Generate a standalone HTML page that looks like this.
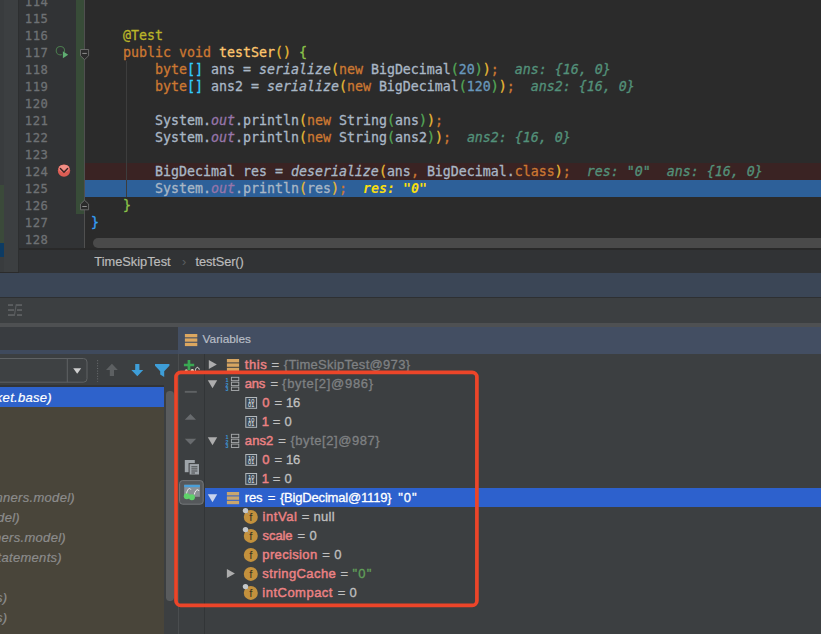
<!DOCTYPE html>
<html>
<head>
<meta charset="utf-8">
<title>Debugger</title>
<style>
html,body{margin:0;padding:0;}
body{width:821px;height:634px;overflow:hidden;background:#2b2b2b;position:relative;font-family:"Liberation Sans",sans-serif;}
.abs{position:absolute;}
/* ---------- editor ---------- */
#leftstrip{left:0;top:0;width:18px;height:272px;background:#3c3f41;}
#leftstrip .a{left:0;top:0;width:4px;height:272px;background:#393c3e;}
#leftstrip .g{left:0;top:185px;width:4px;height:58px;background:#3b4a3a;}
#leftstrip .b{left:0;top:243px;width:4px;height:14px;background:#0d3b63;}
#gutline{left:17.5px;top:0;width:1px;height:272px;background:#2d2f30;}
#gutter{left:18.5px;top:0;width:66px;height:250px;background:#313335;}
#vcs{left:76px;top:0;width:8.5px;height:213.5px;background:#384c38;}
#gutsep{left:84px;top:0;width:1px;height:250px;background:#505050;}
.ln{left:24.7px;width:30px;height:17px;margin-top:1px;line-height:17px;font-family:"DejaVu Sans Mono","Liberation Mono",monospace;font-size:12.2px;letter-spacing:0.62px;color:#6e7174;white-space:pre;-webkit-text-stroke:0.3px currentColor;}
.cl{left:91px;height:17px;line-height:17px;font-family:"DejaVu Sans Mono","Liberation Mono",monospace;font-size:13.29px;color:#a9b7c6;white-space:pre;-webkit-text-stroke:0.3px currentColor;}
.k{color:#cc7832;}
.an{color:#bbb529;}
.fn{color:#ffc66d;}
.i{font-style:italic;}
.sf{font-style:italic;color:#9876aa;}
.n{color:#6897bb;}
.r1{color:#e8ba36;}
.r2{color:#54a857;}
.c1{color:#359ff4;}
.c2{color:#8bc34a;}
.s1{color:#33ccff;}
.h{color:#53917a;font-style:italic;}
.hy{color:#f8de10;font-style:italic;font-weight:bold;-webkit-text-stroke:0;}
#bpline{left:84.5px;top:163px;width:737px;height:17px;background:#3a2323;}
#exline{left:84.5px;top:180px;width:737px;height:17px;background:#2d6099;}
#indent{left:125.5px;top:61px;width:1px;height:136px;background:#3d3d3d;}
#hscroll{left:93px;top:238px;width:740px;height:10px;border-radius:5px;background:#4a4a4a;}
#crumbs{left:18.5px;top:250px;width:803px;height:22.5px;background:#313335;}
#crumbs span{position:absolute;top:1px;line-height:22px;font-size:12.8px;color:#bbbbbb;white-space:pre;-webkit-text-stroke:0.2px currentColor;}
/* ---------- middle bars ---------- */
#bar1{left:0;top:272.5px;width:821px;height:24.5px;background:#3b4656;}
#bar1l{left:0;top:297px;width:821px;height:1px;background:#2e3032;}
#tb{left:0;top:298px;width:821px;height:25.5px;background:#3c3f41;}
#band{left:0;top:323.3px;width:821px;height:4px;background:#4e5052;}
#hdrL{left:0;top:327.2px;width:178.3px;height:22.4px;background:#393c40;}
#hdrL2{left:0;top:349.6px;width:178.3px;height:4.5px;background:#3f4a5d;}
#hdrR{left:178.3px;top:327.2px;width:643px;height:26.9px;background:#434e62;}
#hdrR span{position:absolute;left:24.3px;top:0;line-height:24px;font-size:11.8px;-webkit-text-stroke:0.2px currentColor;color:#b9bec6;}
/* ---------- bottom ---------- */
#bottom{left:0;top:354.1px;width:821px;height:281px;background:#3c3f41;}
#frames{left:0;top:407px;width:164px;height:227px;background:#49453a;}
#fsel{left:0;top:386.6px;width:164px;height:20.6px;background:#2e62cb;}
.fr{left:-199px;height:20px;line-height:20px;font-size:13px;letter-spacing:0.3px;font-style:italic;color:#8c8c8c;white-space:pre;text-align:right;-webkit-text-stroke:0.2px currentColor;}
#fthumb{left:166.4px;top:390.5px;width:7.4px;height:210px;background:#595b5d;border-radius:3.7px;}
#vsep1{left:178px;top:354px;width:1px;height:281px;background:#4a4d4f;}
#vsep2{left:204px;top:353.6px;width:1px;height:281px;background:#323537;}
#vsel{left:205px;top:488.4px;width:616px;height:18.6px;background:#2d61cd;}
.vr{left:0;height:19px;line-height:19px;font-size:13px;color:#c0c0c0;white-space:pre;-webkit-text-stroke:0.3px currentColor;}
.vr span{position:absolute;top:0;}
.nm{color:#ec8284;-webkit-text-stroke:0.45px currentColor;}
.gy{color:#7f8183;}
.st{color:#62a05a;}
#redbox{left:174.1px;top:370.6px;width:297.3px;height:229.6px;border:3.6px solid #ec4529;border-radius:6.5px;}
</style>
</head>
<body>
<!-- editor -->
<div id="leftstrip" class="abs"><div class="a abs"></div><div class="g abs"></div><div class="b abs"></div></div>
<div id="gutline" class="abs"></div>
<div id="gutter" class="abs"></div>
<div id="vcs" class="abs"></div>
<div id="gutsep" class="abs"></div>
<div id="bpline" class="abs"></div>
<div id="exline" class="abs"></div>
<div id="indent" class="abs"></div>

<div class="ln abs" style="top:-7px">114</div>
<div class="ln abs" style="top:10px">115</div>
<div class="ln abs" style="top:27px">116</div>
<div class="ln abs" style="top:44px">117</div>
<div class="ln abs" style="top:61px">118</div>
<div class="ln abs" style="top:78px">119</div>
<div class="ln abs" style="top:95px">120</div>
<div class="ln abs" style="top:112px">121</div>
<div class="ln abs" style="top:129px">122</div>
<div class="ln abs" style="top:146px">123</div>
<div class="ln abs" style="top:163px">124</div>
<div class="ln abs" style="top:180px">125</div>
<div class="ln abs" style="top:197px">126</div>
<div class="ln abs" style="top:214px">127</div>
<div class="ln abs" style="top:231px">128</div>

<div class="cl abs" style="top:27px">    <span class="an">@Test</span></div>
<div class="cl abs" style="top:44px">    <span class="k">public void </span><span class="fn">testSer</span><span class="r1">()</span> <span class="c2">{</span></div>
<div class="cl abs" style="top:61px">        <span class="k">byte</span><span class="s1">[]</span> ans = <span class="i">serialize</span><span class="r1">(</span><span class="k">new </span>BigDecimal<span class="r2">(</span><span class="n">20</span><span class="r2">)</span><span class="r1">)</span><span class="k">;</span>  <span class="h">ans: {16, 0}</span></div>
<div class="cl abs" style="top:78px">        <span class="k">byte</span><span class="s1">[]</span> ans2 = <span class="i">serialize</span><span class="r1">(</span><span class="k">new </span>BigDecimal<span class="r2">(</span><span class="n">120</span><span class="r2">)</span><span class="r1">)</span><span class="k">;</span>  <span class="h">ans2: {16, 0}</span></div>
<div class="cl abs" style="top:112px">        System.<span class="sf">out</span>.println<span class="r1">(</span><span class="k">new </span>String<span class="r2">(</span>ans<span class="r2">)</span><span class="r1">)</span><span class="k">;</span></div>
<div class="cl abs" style="top:129px">        System.<span class="sf">out</span>.println<span class="r1">(</span><span class="k">new </span>String<span class="r2">(</span>ans2<span class="r2">)</span><span class="r1">)</span><span class="k">;</span>  <span class="h">ans2: {16, 0}</span></div>
<div class="cl abs" style="top:163px">        BigDecimal res = <span class="i">deserialize</span><span class="r1">(</span>ans<span class="k">, </span>BigDecimal.<span class="k">class</span><span class="r1">)</span><span class="k">;</span>  <span class="h">res: "0"  ans: {16, 0}</span></div>
<div class="cl abs" style="top:180px">        System.<span class="sf">out</span>.println<span class="r1">(</span>res<span class="r1">)</span><span class="k">;</span>  <span class="hy">res: "0"</span></div>
<div class="cl abs" style="top:197px">    <span class="c2">}</span></div>
<div class="cl abs" style="top:214px"><span class="c1">}</span></div>


<svg class="abs" style="left:50px;top:40px" width="50" height="25" viewBox="50 40 50 25">
 <circle cx="60.4" cy="50.7" r="4.2" fill="none" stroke="#4b7a4e" stroke-width="1.1"/>
 <path d="M61.9 50.6 L69 54.8 L61.9 59 Z" fill="#313335"/>
 <path d="M62.9 51.3 L68.2 54.8 L62.9 58.3 Z" fill="#5fae72"/>
 <path d="M80.5 49.5 H88.6 V55.8 L84.55 59.6 L80.5 55.8 Z" fill="#2b2b2b" stroke="#6e6e6e" stroke-width="0.9"/>
 <rect x="82.3" y="52.9" width="4.5" height="1" fill="#8e8e8e"/>
</svg>
<svg class="abs" style="left:50px;top:160px" width="50" height="60" viewBox="50 160 50 60">
 <circle cx="64" cy="170.6" r="6.2" fill="#dc5d54"/><ellipse cx="64" cy="168.6" rx="5.4" ry="3.9" fill="#ec8178"/><ellipse cx="64" cy="167.4" rx="4.2" ry="2.4" fill="#f18e85"/>
 <path d="M60.4 168.4 L64 172.2 L67.6 168.4" fill="none" stroke="#3b2424" stroke-width="1.4" stroke-linecap="round" stroke-linejoin="round"/>
 <path d="M80.5 209.8 H88.6 V204 L84.55 200.3 L80.5 204 Z" fill="#2b2b2b" stroke="#6e6e6e" stroke-width="0.9"/>
 <rect x="82.3" y="206" width="4.5" height="1" fill="#8e8e8e"/>
</svg>
<div id="hscroll" class="abs"></div>
<div class="abs" style="left:18.5px;top:247.8px;width:803px;height:2.2px;background:#292929"></div>
<div id="crumbs" class="abs"><span style="left:75.8px">TimeSkipTest</span><span style="left:163.5px;color:#5b5e60;-webkit-text-stroke:0">›</span><span style="left:177px;letter-spacing:-0.1px">testSer()</span></div>

<!-- middle bars -->
<div id="bar1" class="abs"></div>
<div id="bar1l" class="abs"></div>
<div id="tb" class="abs"></div>
<div id="band" class="abs"></div>
<div id="hdrL" class="abs"></div>
<div id="hdrL2" class="abs"></div>
<div id="hdrR" class="abs"><span>Variables</span></div>

<!-- bottom -->
<div id="bottom" class="abs"></div>
<div id="frames" class="abs"></div>
<div class="abs" style="left:0;top:385.4px;width:164px;height:1.2px;background:#323436"></div>
<div id="fsel" class="abs"></div>
<div id="fthumb" class="abs"></div>
<div id="vsep1" class="abs"></div>
<div id="vsep2" class="abs"></div>
<div id="vsel" class="abs"></div>

<div class="fr abs" style="top:388px;width:251px;color:#fff">socket.base)</div>
<div class="fr abs" style="top:488px;width:274px">runners.model)</div>
<div class="fr abs" style="top:508px;width:219px">model)</div>
<div class="fr abs" style="top:528px;width:265px">runners.model)</div>
<div class="fr abs" style="top:548px;width:261px">statements)</div>
<div class="fr abs" style="top:588px;width:206.4px">runners)</div>
<div class="fr abs" style="top:608px;width:206.4px">runners)</div>

<div class="vr abs" style="top:355px"><span class="nm" style="left:244.8px;letter-spacing:0.56px">this</span><span style="left:271.6px">=</span><span class="gy" style="left:283.8px;letter-spacing:0.30px">{TimeSkipTest@973}</span></div>
<div class="vr abs" style="top:374px"><span class="nm" style="left:244.8px;letter-spacing:-0.28px">ans</span><span style="left:270.4px">=</span><span class="gy" style="left:282.1px;letter-spacing:0.70px">{byte[2]@986}</span></div>
<div class="vr abs" style="top:393px"><span class="nm" style="left:262.3px">0</span><span style="left:274.4px">=</span><span style="left:286.0px;letter-spacing:-0.30px">16</span></div>
<div class="vr abs" style="top:412px"><span class="nm" style="left:261.7px">1</span><span style="left:272.7px">=</span><span style="left:284.6px">0</span></div>
<div class="vr abs" style="top:431px"><span class="nm" style="left:244.8px;letter-spacing:0.10px">ans2</span><span style="left:278.2px">=</span><span class="gy" style="left:290.4px;letter-spacing:0.56px">{byte[2]@987}</span></div>
<div class="vr abs" style="top:450px"><span class="nm" style="left:262.3px">0</span><span style="left:274.4px">=</span><span style="left:286.0px;letter-spacing:-0.30px">16</span></div>
<div class="vr abs" style="top:469px"><span class="nm" style="left:261.7px">1</span><span style="left:272.7px">=</span><span style="left:284.6px">0</span></div>
<div class="vr abs" style="top:488px;color:#fff"><span style="left:244.8px;letter-spacing:-0.13px">res</span><span style="left:267.7px">=</span><span style="left:279.9px;letter-spacing:-0.18px">{BigDecimal@1119}</span><span style="left:398.3px;letter-spacing:0.87px">&quot;0&quot;</span></div>
<div class="vr abs" style="top:507px"><span class="nm" style="left:262.6px;letter-spacing:0.57px">intVal</span><span style="left:301.7px">=</span><span style="left:313.4px;letter-spacing:0.35px">null</span></div>
<div class="vr abs" style="top:526px"><span class="nm" style="left:262.6px;letter-spacing:-0.09px">scale</span><span style="left:297.4px">=</span><span style="left:309.6px">0</span></div>
<div class="vr abs" style="top:545px"><span class="nm" style="left:262.3px;letter-spacing:0.35px">precision</span><span style="left:322.3px">=</span><span style="left:334.2px">0</span></div>
<div class="vr abs" style="top:564px"><span class="nm" style="left:262.3px;letter-spacing:0.41px">stringCache</span><span style="left:340.4px">=</span><span class="st" style="left:352.6px;letter-spacing:1.12px">&quot;0&quot;</span></div>
<div class="vr abs" style="top:583px"><span class="nm" style="left:262.3px;letter-spacing:0.49px">intCompact</span><span style="left:337.7px">=</span><span style="left:349.6px">0</span></div>
<svg class="abs" style="left:204px;top:354px" width="70" height="260" viewBox="204 354 70 260">
<path d="M208.8 359.9 L216.8 364.5 L208.8 369.1 Z" fill="#adadad"/><rect x="226.9" y="359.0" width="12.2" height="3.4" fill="#d6a562"/><rect x="226.9" y="363.4" width="12.2" height="3.4" fill="#d6a562"/><rect x="226.9" y="367.8" width="12.2" height="3.4" fill="#d6a562"/>
<path d="M207.8 380.2 L217.2 380.2 L212.5 388.2 Z" fill="#adadad"/><text x="225.6" y="381.8" font-family="Liberation Sans,sans-serif" font-size="5.4" font-weight="bold" fill="#3d95d6">1</text><text x="225.6" y="386.5" font-family="Liberation Sans,sans-serif" font-size="5.4" font-weight="bold" fill="#3d95d6">2</text><text x="225.6" y="391.2" font-family="Liberation Sans,sans-serif" font-size="5.4" font-weight="bold" fill="#3d95d6">3</text><rect x="231.4" y="377.3" width="7.4" height="3.4" fill="none" stroke="#a9acae" stroke-width="0.9"/><rect x="231.4" y="382.2" width="7.4" height="3.4" fill="none" stroke="#a9acae" stroke-width="0.9"/><rect x="231.4" y="387.1" width="7.4" height="3.4" fill="none" stroke="#a9acae" stroke-width="0.9"/>
<rect x="245.8" y="397.5" width="10.8" height="10.8" fill="#3a4651" stroke="#b3b8bc" stroke-width="1"/><text x="251.2" y="402.6" text-anchor="middle" font-family="Liberation Sans,sans-serif" font-size="5.6" fill="#f0f3f5" style="-webkit-font-smoothing:antialiased">10</text><text x="251.2" y="407.1" text-anchor="middle" font-family="Liberation Sans,sans-serif" font-size="5.6" fill="#f0f3f5">01</text>
<rect x="245.8" y="416.5" width="10.8" height="10.8" fill="#3a4651" stroke="#b3b8bc" stroke-width="1"/><text x="251.2" y="421.6" text-anchor="middle" font-family="Liberation Sans,sans-serif" font-size="5.6" fill="#f0f3f5" style="-webkit-font-smoothing:antialiased">10</text><text x="251.2" y="426.1" text-anchor="middle" font-family="Liberation Sans,sans-serif" font-size="5.6" fill="#f0f3f5">01</text>
<path d="M207.8 437.2 L217.2 437.2 L212.5 445.2 Z" fill="#adadad"/><text x="225.6" y="438.8" font-family="Liberation Sans,sans-serif" font-size="5.4" font-weight="bold" fill="#3d95d6">1</text><text x="225.6" y="443.5" font-family="Liberation Sans,sans-serif" font-size="5.4" font-weight="bold" fill="#3d95d6">2</text><text x="225.6" y="448.2" font-family="Liberation Sans,sans-serif" font-size="5.4" font-weight="bold" fill="#3d95d6">3</text><rect x="231.4" y="434.3" width="7.4" height="3.4" fill="none" stroke="#a9acae" stroke-width="0.9"/><rect x="231.4" y="439.2" width="7.4" height="3.4" fill="none" stroke="#a9acae" stroke-width="0.9"/><rect x="231.4" y="444.1" width="7.4" height="3.4" fill="none" stroke="#a9acae" stroke-width="0.9"/>
<rect x="245.8" y="454.5" width="10.8" height="10.8" fill="#3a4651" stroke="#b3b8bc" stroke-width="1"/><text x="251.2" y="459.6" text-anchor="middle" font-family="Liberation Sans,sans-serif" font-size="5.6" fill="#f0f3f5" style="-webkit-font-smoothing:antialiased">10</text><text x="251.2" y="464.1" text-anchor="middle" font-family="Liberation Sans,sans-serif" font-size="5.6" fill="#f0f3f5">01</text>
<rect x="245.8" y="473.5" width="10.8" height="10.8" fill="#3a4651" stroke="#b3b8bc" stroke-width="1"/><text x="251.2" y="478.6" text-anchor="middle" font-family="Liberation Sans,sans-serif" font-size="5.6" fill="#f0f3f5" style="-webkit-font-smoothing:antialiased">10</text><text x="251.2" y="483.1" text-anchor="middle" font-family="Liberation Sans,sans-serif" font-size="5.6" fill="#f0f3f5">01</text>
<path d="M207.8 494.2 L217.2 494.2 L212.5 502.2 Z" fill="#c9d4ee"/><rect x="226.9" y="492.0" width="12.2" height="3.4" fill="#c9a66e"/><rect x="226.9" y="496.4" width="12.2" height="3.4" fill="#c9a66e"/><rect x="226.9" y="500.8" width="12.2" height="3.4" fill="#c9a66e"/>
<circle cx="250.8" cy="516.9" r="7" fill="#c3913d"/><text x="250.9" y="520.9" text-anchor="middle" font-family="Liberation Sans,sans-serif" font-size="11.5" fill="#3b331f">f</text><path d="M246.2 511.3 L248.6 513.7" stroke="#9a9d9f" stroke-width="1"/><circle cx="245.5" cy="510.6" r="2.7" fill="#c4c8cb"/>
<circle cx="250.8" cy="535.9" r="7" fill="#c3913d"/><text x="250.9" y="539.9" text-anchor="middle" font-family="Liberation Sans,sans-serif" font-size="11.5" fill="#3b331f">f</text><path d="M246.2 530.3 L248.6 532.7" stroke="#9a9d9f" stroke-width="1"/><circle cx="245.5" cy="529.6" r="2.7" fill="#c4c8cb"/>
<circle cx="250.8" cy="554.9" r="7" fill="#c3913d"/><text x="250.9" y="558.9" text-anchor="middle" font-family="Liberation Sans,sans-serif" font-size="11.5" fill="#3b331f">f</text>
<path d="M226.9 568.9 L234.9 573.5 L226.9 578.1 Z" fill="#adadad"/><circle cx="250.8" cy="573.9" r="7" fill="#c3913d"/><text x="250.9" y="577.9" text-anchor="middle" font-family="Liberation Sans,sans-serif" font-size="11.5" fill="#3b331f">f</text>
<circle cx="250.8" cy="592.9" r="7" fill="#c3913d"/><text x="250.9" y="596.9" text-anchor="middle" font-family="Liberation Sans,sans-serif" font-size="11.5" fill="#3b331f">f</text><path d="M246.2 587.3 L248.6 589.7" stroke="#9a9d9f" stroke-width="1"/><circle cx="245.5" cy="586.6" r="2.7" fill="#c4c8cb"/>
</svg>
<svg class="abs" style="left:0;top:297px" width="40" height="28" viewBox="0 297 40 28">
 <g fill="#5b5e60">
  <rect x="8" y="304.1" width="5" height="1.9"/><rect x="8" y="309.1" width="6" height="1.9"/><rect x="8" y="314.1" width="6" height="1.9"/>
  <rect x="16" y="304.1" width="6" height="1.9"/><rect x="17" y="309.1" width="5" height="1.9"/><rect x="17" y="314.1" width="5" height="1.9"/>
 </g>
 <path d="M16.2 304.3 L14.4 315.8" stroke="#5b5e60" stroke-width="1.1" fill="none"/>
</svg>
<svg class="abs" style="left:0;top:354px" width="178" height="34" viewBox="0 354 178 34">
 <rect x="-5" y="358.5" width="92" height="23.7" rx="3.5" fill="#3e4143" stroke="#5f6264" stroke-width="1"/>
 <path d="M67.3 358.5 V382.2" stroke="#5f6264" stroke-width="1"/>
 <path d="M73.2 368.3 H81.2 L77.2 373.8 Z" fill="#cfcfcf"/>
 <path d="M97.6 360.2 V381.6" stroke="#6d7072" stroke-width="1" stroke-dasharray="1 1.6"/>
 <path d="M111.9 363.8 L117.8 370 H114 V376 H109.8 V370 H106 Z" fill="#5d6062"/>
 <path d="M137.3 376.2 L143.2 370 H139.4 V364 H135.2 V370 H131.4 Z" fill="#3e9ed8"/>
 <path d="M155 363.9 H169.4 V365.8 L164.2 371.2 V376.9 L160.2 374.6 V371.2 L155 365.8 Z" fill="#3e9ed8"/>
</svg>
<svg class="abs" style="left:178px;top:354px" width="27" height="156" viewBox="178 354 27 156">
 <path d="M183.9 365 H194.2 M188.95 360 V370.2" stroke="#3aa953" stroke-width="2.7" fill="none"/>
 <circle cx="186.3" cy="370.8" r="1.5" fill="#d9d2b0"/><circle cx="192.3" cy="370.9" r="1.8" fill="#efe7cd"/>
 <path d="M195.3 371 C195.8 366.6 198.4 366.2 199.3 369.6" stroke="#e8e8e8" stroke-width="1" fill="none"/>
 <rect x="184.8" y="390.9" width="12" height="1.9" fill="#5f6264"/>
 <path d="M184.8 419.7 L190.4 414.1 L196 419.7 Z" fill="#686b6e"/>
 <path d="M184.8 438.8 L190.5 444.6 L196.2 438.8 Z" fill="#686b6e"/>
 <rect x="184.8" y="460" width="10" height="12.2" fill="#9fa5aa"/>
 <rect x="189.1" y="463.6" width="10.4" height="11.4" fill="#9fa5aa" stroke="#3c3f41" stroke-width="1"/>
 <path d="M191.4 466.8 H197.4 M191.4 468.9 H197.4 M191.4 471 H197.4 M191.4 473 H195" stroke="#3c3f41" stroke-width="0.9"/>
 <rect x="179.6" y="480.6" width="23.6" height="23.6" rx="3" fill="#55585b" stroke="#74777a" stroke-width="1"/>
 <rect x="184.2" y="484.8" width="15.7" height="12" fill="#8b9095"/>
 <rect x="184.2" y="484.8" width="15.7" height="2.4" fill="#4a9fd9"/>
 <path d="M186.4 494 C187.4 488.5 189.8 487.3 190.8 489.6 M194.3 494.5 C195.3 489.5 198.2 488.6 199 491" stroke="#f2f2f2" stroke-width="1" fill="none"/>
 <circle cx="186.8" cy="496.3" r="3" fill="#5fd26a"/><circle cx="191.9" cy="497.2" r="3" fill="#5fd26a"/>
</svg>
<svg class="abs" style="left:180px;top:330px" width="22" height="20" viewBox="180 330 22 20">
 <rect x="184.9" y="334" width="12.4" height="3.3" fill="#dca760"/><rect x="184.9" y="338.4" width="12.4" height="3.3" fill="#dca760"/><rect x="184.9" y="342.8" width="12.4" height="3.3" fill="#dca760"/>
</svg>
<svg class="abs" style="left:170px;top:366px" width="314" height="246" viewBox="170 366 314 246"><rect x="176" y="372.4" width="300.9" height="233" rx="4.7" fill="none" stroke="#ec4529" stroke-width="3.7"/></svg>
</body>
</html>
